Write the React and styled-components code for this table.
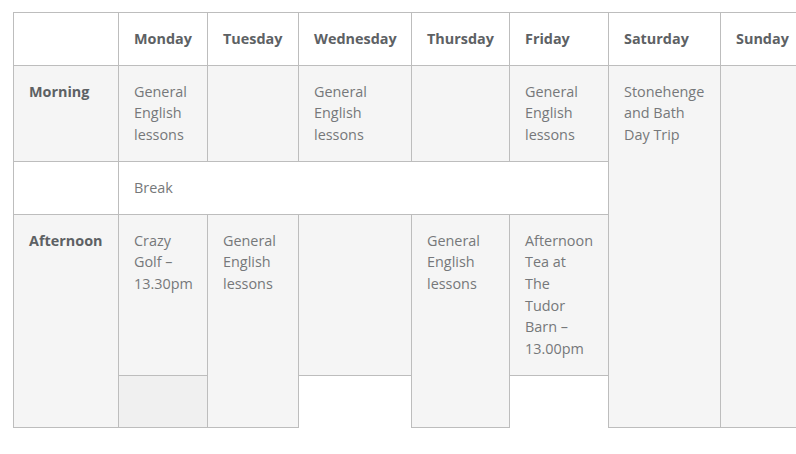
import React from "react";
import styled, { createGlobalStyle } from "styled-components";

const Global = createGlobalStyle`
  html, body { margin: 0; padding: 0; background: #fff; overflow: hidden; }
  body { font-family: "Open Sans", "Liberation Sans", sans-serif; }
`;

const Page = styled.div`
  padding: 12px 0 0 13px;
  width: 796px;
  height: 454px;
  box-sizing: border-box;
  overflow: hidden;
`;

const Table = styled.table`
  border-collapse: collapse;
  table-layout: fixed;
  width: 791px;
  font-size: 14.4px;
  line-height: 21.7px;
  color: #76787a;
`;

const Th = styled.th`
  padding: 15px 15px;
  text-align: left;
  font-weight: 700;
  color: #5d6164;
  border: 1px solid #bdbdbd;
  background: #fff;
  vertical-align: top;
`;

const Td = styled.td`
  padding: 15px 15px;
  text-align: left;
  vertical-align: top;
  border: 1px solid #bdbdbd;
  background: ${(p) => (p.$tone === "white" ? "#fff" : p.$tone === "dark" ? "#f0f0f0" : "#f5f5f5")};
  font-weight: ${(p) => (p.$label ? 700 : 400)};
  color: ${(p) => (p.$label ? "#5d6164" : "#76787a")};
`;

const widths = [105, 89, 91, 113, 98, 99, 112, 84];
const days = ["Monday", "Tuesday", "Wednesday", "Thursday", "Friday", "Saturday", "Sunday"];
const GE = "General English lessons";

export default function App() {
  return (
    <Page>
      <Global />
      <Table>
        <colgroup>
          {widths.map((w, i) => (
            <col key={i} style={{ width: w }} />
          ))}
        </colgroup>
        <thead>
          <tr>
            <Th />
            {days.map((d) => (
              <Th key={d}>{d}</Th>
            ))}
          </tr>
        </thead>
        <tbody>
          <tr>
            <Td $label>Morning</Td>
            <Td>{GE}</Td>
            <Td />
            <Td>{GE}</Td>
            <Td />
            <Td>{GE}</Td>
            <Td rowSpan={4}>Stonehenge and Bath Day Trip</Td>
            <Td rowSpan={4} />
          </tr>
          <tr>
            <Td $tone="white" />
            <Td $tone="white" colSpan={5}>Break</Td>
          </tr>
          <tr>
            <Td $label rowSpan={2}>Afternoon</Td>
            <Td>Crazy Golf – 13.30pm</Td>
            <Td rowSpan={2}>{GE}</Td>
            <Td />
            <Td rowSpan={2}>{GE}</Td>
            <Td>Afternoon Tea at The Tudor Barn – 13.00pm</Td>
          </tr>
          <tr>
            <Td $tone="dark">&nbsp;</Td>
          </tr>
        </tbody>
      </Table>
    </Page>
  );
}
